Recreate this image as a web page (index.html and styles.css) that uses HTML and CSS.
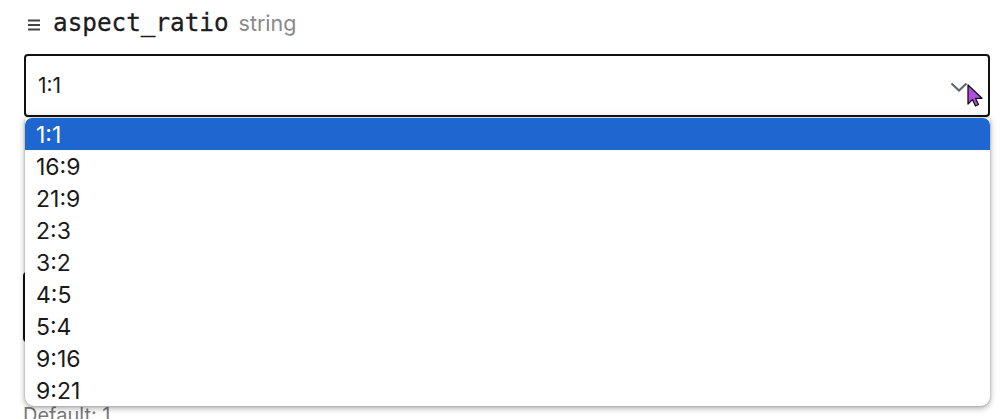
FILE: index.html
```
<!DOCTYPE html>
<html>
<head>
<meta name="viewport" content="width=device-width, initial-scale=1">
<link rel="stylesheet" href="styles.css">
</head>
<body>

<div class="field">
  <div class="field-head">
    <svg class="drag" width="14" height="12" viewBox="0 0 14 12"><path d="M1 1.5h12M1 6h12M1 10.5h12" stroke="#444" stroke-width="1.8"/></svg>
    <span class="name">aspect_ratio</span>
    <span class="type">string</span>
  </div>

  <div class="select-wrap">
    <div class="select">
      <span>1:1</span>
      <svg class="chevron" width="18" height="10" viewBox="0 0 18 10"><path d="M1.5 1.5l7.5 7 7.5-7" fill="none" stroke="#5f6572" stroke-width="2.2"/></svg>
    </div>
    <svg class="cursor" width="16" height="24" viewBox="0 0 16 24"><path d="M1 1v19l4.5-4.5 3 6.5 3-1.5-3-6.2h6.5z" fill="#b04ce0" stroke="#111" stroke-width="1.3" stroke-linejoin="round"/></svg>

    <ul class="options">
      <li class="active">1:1</li>
      <li>16:9</li>
      <li>21:9</li>
      <li>2:3</li>
      <li>3:2</li>
      <li>4:5</li>
      <li>5:4</li>
      <li>9:16</li>
      <li>9:21</li>
    </ul>
  </div>
</div>

<div class="field next">
  <div class="box"></div>
  <div class="hint">Default: 1</div>
</div>

</body>
</html>
```
FILE: styles.css
```
body {
  margin: 0;
  padding: 0 10px 0 23px;
  background: #fff;
  font-family: Inter, "Noto Sans", sans-serif;
  color: #1b1b1b;
}

.field-head {
  display: flex;
  align-items: baseline;
  gap: 10px;
  height: 44px;
  padding-top: 8px;
  box-sizing: border-box;
}

.drag {
  margin-left: 4px;
  margin-right: 2px;
}

.name {
  font-family: "DejaVu Sans Mono", "Liberation Mono", monospace;
  font-size: 24.3px;
  color: #1c1c1c;
  -webkit-text-stroke: 0.3px #1c1c1c;
}

.type {
  font-size: 21.5px;
  color: #8a8a8a;
}

.select-wrap {
  position: relative;
  margin-top: 10px;
}

.select {
  display: flex;
  align-items: center;
  justify-content: space-between;
  height: 63px;
  margin-left: 1px;
  padding: 0 20px 0 12px;
  border: 2px solid #111;
  border-radius: 4px;
  box-sizing: border-box;
  font-size: 21px;
  box-shadow: inset 0 -6px 8px -6px rgba(0,0,0,0.08);
}

.chevron {
  margin-top: 2px;
}

.cursor {
  position: absolute;
  left: 944px;
  top: 30px;
}

.options {
  position: absolute;
  left: 2px;
  right: 0;
  top: 64px;
  margin: 0;
  padding: 0;
  list-style: none;
  background: #fff;
  border-radius: 0 0 9px 9px;
  box-shadow: 0 2px 6px rgba(0,0,0,0.35), 0 0 2px rgba(0,0,0,0.3);
  z-index: 2;
}

.options li {
  height: 32px;
  box-sizing: border-box;
  padding: 3px 0 0 11px;
  line-height: 29px;
  font-size: 23px;
  color: #1a1a1a;
}

.options li.active {
  background: #1f66d1;
  color: #fff;
  border-radius: 7px 7px 0 0;
}

.next {
  margin-top: 155px;
}

.box {
  height: 66px;
  border: 2px solid #111;
  border-radius: 4px;
}

.hint {
  margin-top: 61px;
  font-size: 20px;
  color: #777;
}
```
